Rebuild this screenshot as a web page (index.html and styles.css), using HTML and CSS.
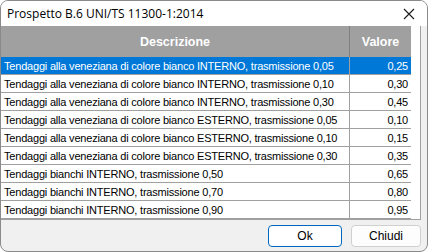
FILE: index.html
```html
<!DOCTYPE html>
<html lang="it">
<head>
  <meta charset="UTF-8" />
  <title>Prospetto B.6 UNI/TS 11300-1:2014</title>
  <link rel="stylesheet" href="styles.css">
</head>
<body>
  <div class="window">
    <div class="titlebar">
      <span class="title">Prospetto B.6 UNI/TS 11300-1:2014</span>
      <svg class="close" width="12" height="12" viewBox="0 0 12 12">
        <path d="M1 1 L11 11 M11 1 L1 11" stroke="#1a1a1a" stroke-width="1.1" fill="none"/>
      </svg>
    </div>

    <!-- tabella -->
    <div class="grid">
      <table>
        <thead>
          <tr><th class="desc">Descrizione</th><th class="val">Valore</th></tr>
        </thead>
        <tbody>
          <tr class="selected"><td>Tendaggi alla veneziana di colore bianco INTERNO, trasmissione 0,05</td><td class="num">0,25</td></tr>
          <tr><td>Tendaggi alla veneziana di colore bianco INTERNO, trasmissione 0,10</td><td class="num">0,30</td></tr>
          <tr><td>Tendaggi alla veneziana di colore bianco INTERNO, trasmissione 0,30</td><td class="num">0,45</td></tr>
          <tr><td>Tendaggi alla veneziana di colore bianco ESTERNO, trasmissione 0,05</td><td class="num">0,10</td></tr>
          <tr><td>Tendaggi alla veneziana di colore bianco ESTERNO, trasmissione 0,10</td><td class="num">0,15</td></tr>
          <tr><td>Tendaggi alla veneziana di colore bianco ESTERNO, trasmissione 0,30</td><td class="num">0,35</td></tr>
          <tr><td>Tendaggi bianchi INTERNO, trasmissione 0,50</td><td class="num">0,65</td></tr>
          <tr><td>Tendaggi bianchi INTERNO, trasmissione 0,70</td><td class="num">0,80</td></tr>
          <tr><td>Tendaggi bianchi INTERNO, trasmissione 0,90</td><td class="num">0,95</td></tr>
        </tbody>
      </table>
    </div>

    <div class="buttons">
      <button class="btn default">Ok</button>
      <button class="btn chiudi">Chiudi</button>
    </div>
  </div>
</body>
</html>
```

FILE: styles.css
```css
body { margin: 0; background: #fff; }
.window { width: 428px; height: 252px; box-sizing: border-box; border: 1px solid #8a8a8a; border-radius: 8px; overflow: hidden; background: #f0f0f0; font-family: "Liberation Sans", Arial, sans-serif; }
.titlebar { height: 25px; background: #fff; display: flex; align-items: center; justify-content: space-between; padding: 0 12px 0 6px; }
.title { font-family: "Open Sans", "Noto Sans", sans-serif; font-size: 12px; color: #000; }
.close { display: block; }
.grid { width: 419px; height: 193px; background: #fff; border-right: 1px solid #a0a0a0; border-bottom: 1px solid #a0a0a0; overflow: hidden; }
table { border-collapse: collapse; table-layout: fixed; width: 410px; font-size: 11px; letter-spacing: -0.2px; }
th { height: 31px; padding: 0; background: #a0a0a0; color: #fff; font-weight: bold; font-size: 12.5px; letter-spacing: 0; text-align: center; }
th.desc { width: 348px; border-right: 1px solid #808080; }
td { height: 17px; padding: 0 0 0 3px; border-bottom: 1px solid #a0a0a0; border-right: 1px solid #a0a0a0; color: #000; white-space: nowrap; overflow: hidden; }
td.num { text-align: right; padding: 0 3px 0 0; border-right: none; }
tr.selected td { background: #0078d7; color: #fff; }
.buttons { display: flex; justify-content: flex-end; gap: 9px; padding: 5px 6px 0 0; }
.btn { width: 74px; height: 22px; font-family: "Liberation Sans", Arial, sans-serif; font-size: 12px; background: #fdfdfd; border: 1px solid #d0d0d0; border-radius: 4px; color: #000; padding: 0; }
.btn.chiudi { width: 70px; }
.btn.default { background: #fff; border-color: #0067c0; }
```
